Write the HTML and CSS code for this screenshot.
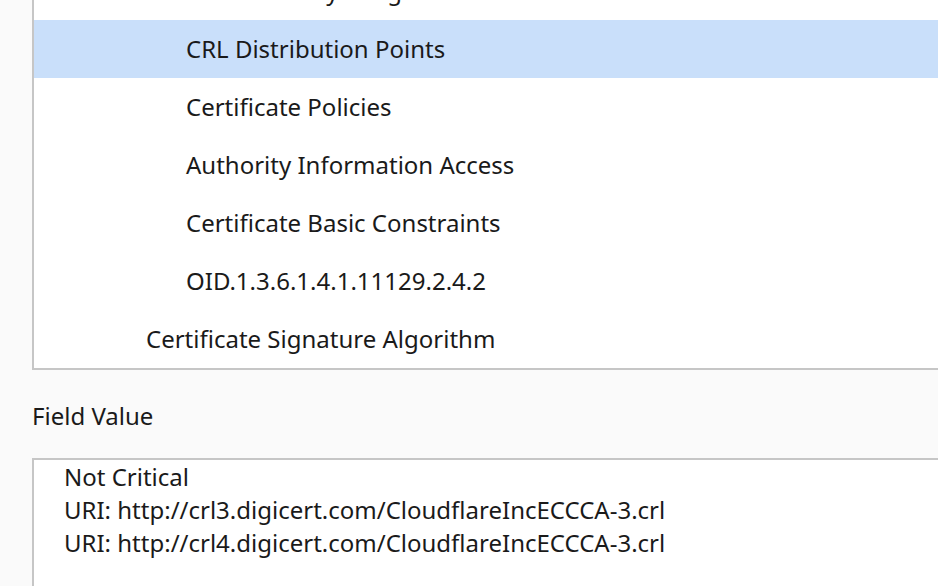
FILE: index.html
```html
<!DOCTYPE html>
<html>
<head>
<meta charset="utf-8">
<link rel="stylesheet" href="styles.css">
</head>
<body>
<div class="tree">
  <ul class="rows">
    <li class="row child">Extended Key Usage</li>
    <li class="row child selected">CRL Distribution Points</li>
    <li class="row child">Certificate Policies</li>
    <li class="row child">Authority Information Access</li>
    <li class="row child">Certificate Basic Constraints</li>
    <li class="row child">OID.1.3.6.1.4.1.11129.2.4.2</li>
    <li class="row parent">Certificate Signature Algorithm</li>
  </ul>
</div>
<div class="label">Field Value</div>
<div class="value">
  <div class="line">Not Critical</div>
  <div class="line">URI: http://crl3.digicert.com/CloudflareIncECCCA-3.crl</div>
  <div class="line">URI: http://crl4.digicert.com/CloudflareIncECCCA-3.crl</div>
</div>
</body>
</html>
```
FILE: styles.css
```css
html, body {
  margin: 0;
  padding: 0;
  height: 100%;
  overflow: hidden;
}
body {
  background: #fafafa;
  font-family: "Noto Sans", "Open Sans", sans-serif;
  font-size: 24px;
  color: #1a1a1a;
}
.tree {
  margin-left: 32px;
  margin-right: -40px;
  background: #ffffff;
  border-left: 2px solid #c6c6c6;
  border-bottom: 2px solid #c6c6c6;
  overflow: hidden;
}
.rows {
  list-style: none;
  margin: -38px 0 0 0;
  padding: 0;
}
.row {
  height: 58px;
  line-height: 57px;
  white-space: nowrap;
}
.row.child {
  padding-left: 152px;
}
.row.parent {
  padding-left: 112px;
}
.row.selected {
  background: #c9dffa;
}
.label {
  padding: 29px 0 26px 32px;
  line-height: 33px;
}
.value {
  margin-left: 32px;
  margin-right: -40px;
  height: 200px;
  background: #ffffff;
  border-left: 2px solid #c6c6c6;
  border-top: 2px solid #c6c6c6;
  padding-left: 30px;
}
.line {
  line-height: 33px;
  white-space: nowrap;
}
```
